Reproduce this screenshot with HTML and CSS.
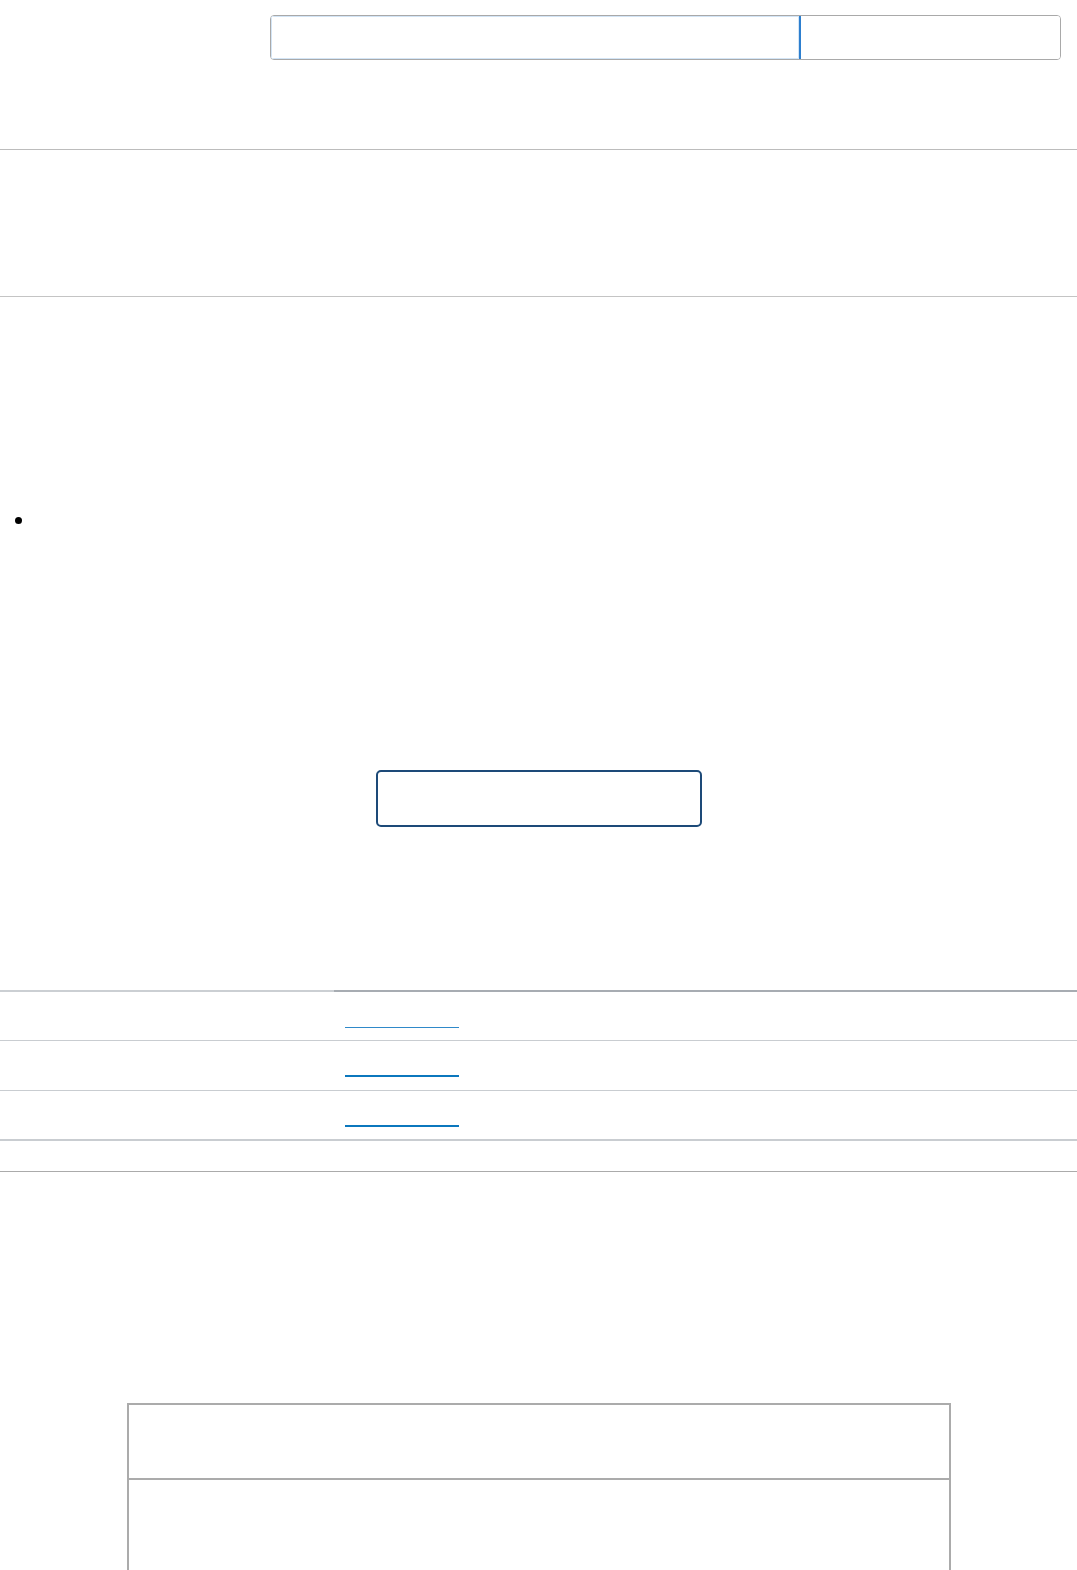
FILE: index.html
```html
<!DOCTYPE html>
<html lang="es">
<head>
    <meta charset="UTF-8">
    <meta name="viewport" content="width=device-width, initial-scale=1.0">
    <title>Portal</title>
    <link rel="stylesheet" href="styles.css">
</head>
<body>
    <header class="topbar">
        <form class="search" onsubmit="return false">
            <input class="search-input" type="text" aria-label="Buscar">
            <button class="search-btn" type="submit" aria-label="Buscar"></button>
        </form>
    </header>

    <nav class="band"></nav>

    <ul class="bullets">
        <li></li>
    </ul>

    <div class="action">
        <a class="outline-btn" href="#" aria-label="Ver más"></a>
    </div>

    <table class="list">
        <tr>
            <td class="col-name"></td>
            <td class="col-link"><a class="link link-thin" href="#" aria-label="Enlace 1"></a></td>
        </tr>
        <tr>
            <td class="col-name"></td>
            <td class="col-link"><a class="link" href="#" aria-label="Enlace 2"></a></td>
        </tr>
        <tr>
            <td class="col-name"></td>
            <td class="col-link"><a class="link" href="#" aria-label="Enlace 3"></a></td>
        </tr>
        <tr class="list-foot">
            <td></td>
            <td></td>
        </tr>
    </table>

    <table class="grid">
        <tr class="grid-head"><td></td></tr>
        <tr class="grid-body"><td></td></tr>
    </table>
</body>
</html>
```

FILE: styles.css
```css
* {
    box-sizing: border-box;
}

body {
    margin: 0;
    background-color: #fff;
    color: #222;
    font-family: "Liberation Sans", Arial, sans-serif;
}

/* barra superior con el buscador */
.topbar {
    height: 150px;
    padding: 15px 0 0 270px;
    border-bottom: 1px solid #bcbcbc;
}

.search {
    display: flex;
    width: 791px;
    height: 45px;
    margin: 0;
    border: 1px solid #a9a9a9;
    border-radius: 4px;
    overflow: hidden;
}

.search-input {
    width: 528px;
    margin: 0;
    border: none;
    box-shadow: inset 0 0 0 1px #d3e5f6;
    outline: none;
}

.search-btn {
    flex: 1;
    margin: 0;
    padding: 0;
    background-color: #fff;
    border: none;
    border-left: 2px solid #2d7fcf;
}

.band {
    height: 147px;
    border-bottom: 1px solid #c4c4c4;
}

.bullets {
    list-style: none;
    margin: 220px 0 0;
    padding: 0 0 0 15px;
}

.bullets li::before {
    content: "";
    display: block;
    width: 7px;
    height: 7px;
    border-radius: 50%;
    background-color: #000;
}

.action {
    display: flex;
    justify-content: center;
    margin-top: 246px;
}

.outline-btn {
    display: block;
    width: 326px;
    height: 57px;
    border: 2px solid #1d4a78;
    border-radius: 5px;
}

/* lista de enlaces */
.list {
    width: 100%;
    margin-top: 163px;
    border-collapse: collapse;
}

.list td {
    height: 50px;
    padding: 0;
    vertical-align: top;
    border-bottom: 1px solid #c9cdd1;
}

.list tr:first-child td {
    height: 49px;
    border-top: 2px solid #a7acb2;
}

.list tr:first-child .col-name {
    border-top-color: #cbcfd3;
}

.list tr:nth-child(3) td {
    border-bottom: 2px solid #c9cdd1;
}

.col-name {
    width: 334px;
}

.link {
    display: block;
    width: 114px;
    height: 36px;
    margin-left: 11px;
    border-bottom: 2px solid #0b77bd;
}

.link-thin {
    border-bottom: 1px solid #2f89c9;
}

.list .list-foot td {
    height: 31px;
    border-bottom: 1px solid #ababab;
}

/* tabla con borde */
.grid {
    width: 824px;
    margin: 231px auto 0;
    border-collapse: collapse;
}

.grid td {
    padding: 0;
    border: 2px solid #ababab;
}

.grid-head td {
    height: 75px;
}

.grid-body td {
    height: 160px;
}
```
